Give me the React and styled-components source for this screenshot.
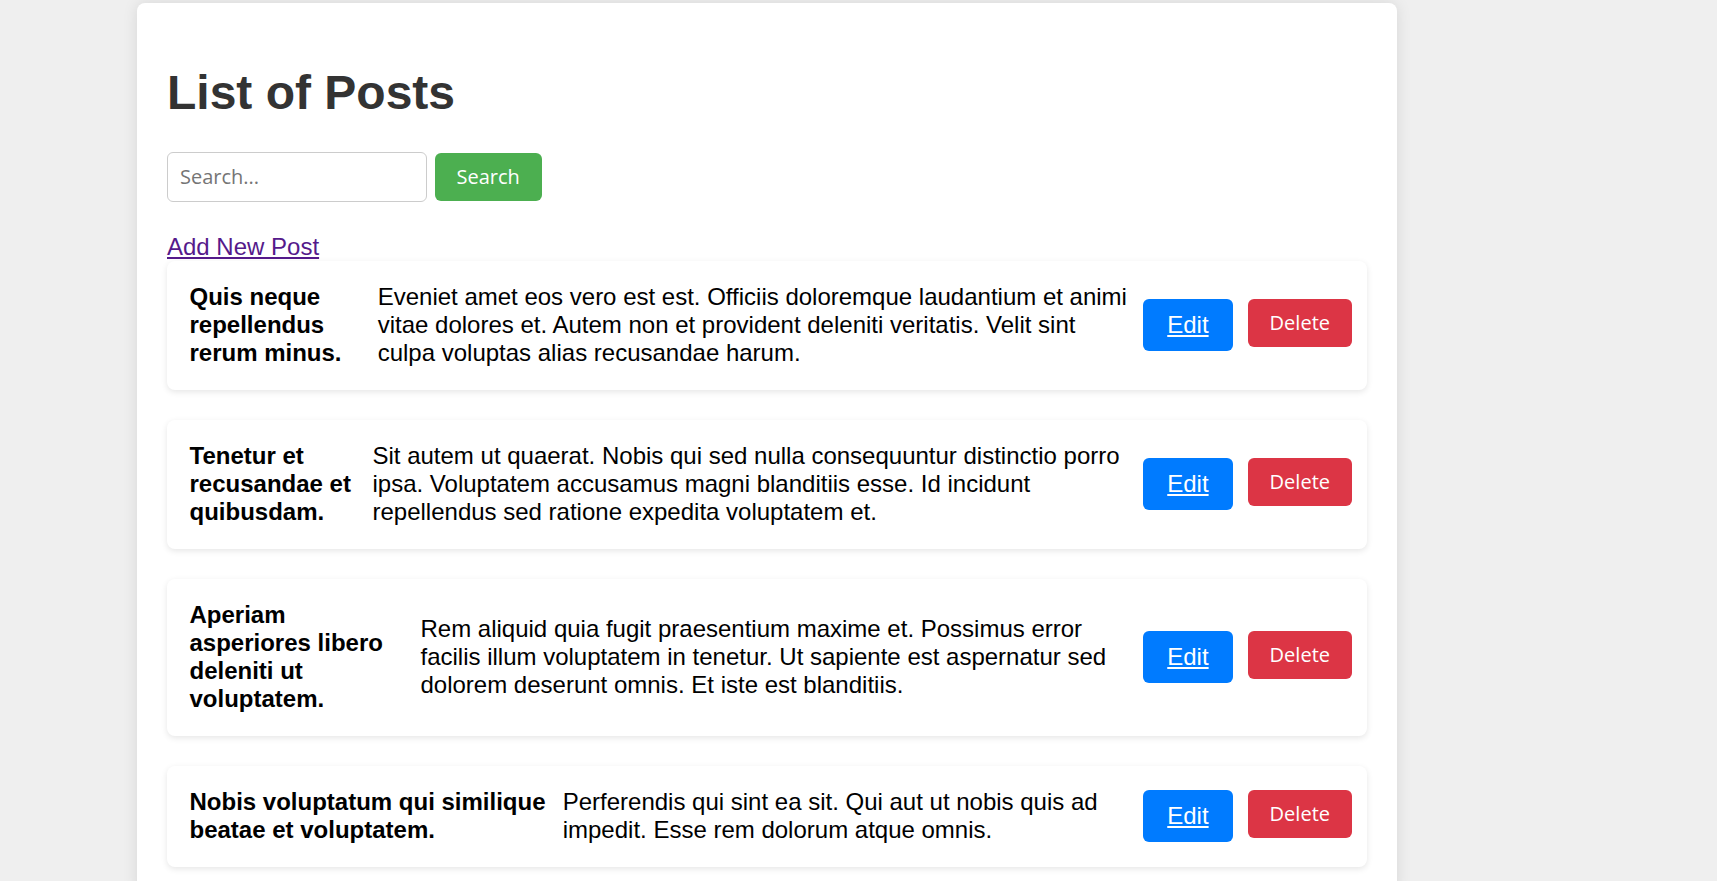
import React from "react";
import styled, { createGlobalStyle } from "styled-components";

const GlobalStyle = createGlobalStyle`
  html, body {
    margin: 0;
    padding: 0;
    background: #efefef;
  }
  body {
    font-family: "Liberation Sans", Arial, sans-serif;
    font-size: 24px;
    color: #000;
  }
`;

const Container = styled.div`
  width: 1200px;
  margin: 3px 0 0 137px;
  padding: 30px 30px 30px;
  background: white;
  border-radius: 8px;
  box-shadow: 0 0 15px rgba(0, 0, 0, 0.1);
`;

const Heading = styled.h1`
  margin: 32px 0;
  font-size: 48px;
  font-weight: bold;
  color: #333;
`;

const SearchForm = styled.form`
  display: flex;
  align-items: center;
  gap: 7.5px;
  margin-bottom: 31px;
`;

const SearchInput = styled.input`
  box-sizing: border-box;
  width: 260px;
  height: 49.5px;
  padding: 0 12px;
  border: 1px solid #ccc;
  border-radius: 6px;
  font-family: "Open Sans", "Noto Sans", sans-serif;
  font-size: 20px;
  color: #333;
  outline: none;

  &::placeholder {
    color: #757575;
  }
`;

const Button = styled.button`
  height: 48px;
  padding: 0 22px;
  border: none;
  border-radius: 6px;
  background: ${(p) => p.$bg};
  color: white;
  font-family: "Open Sans", "Noto Sans", sans-serif;
  font-size: 20px;
  line-height: 24px;
  cursor: pointer;
`;

const AddLink = styled.a`
  display: block;
  width: fit-content;
  color: #551a8b;
  text-decoration: underline;
  font-size: 24px;
`;

const PostList = styled.div`
  display: flex;
  flex-direction: column;
  gap: 30px;
`;

const Card = styled.div`
  display: flex;
  align-items: center;
  padding: 22.5px 15px 22.5px 22.5px;
  background: white;
  border-radius: 8px;
  box-shadow: 0 2px 6px rgba(0, 0, 0, 0.1);
`;

const Title = styled.h3`
  margin: 0;
  font-size: 24px;
  font-weight: bold;
  line-height: normal;
`;

const Description = styled.p`
  margin: 0 8.5px 0 15px;
  font-size: 24px;
  line-height: normal;
`;

const Actions = styled.div`
  flex: 0 0 auto;
  display: flex;
  align-items: flex-start;
  gap: 15px;
`;

const EditLink = styled.a`
  display: block;
  padding: 12px 24px;
  border-radius: 6px;
  background: #007bff;
  color: white;
  text-decoration: underline;
  font-size: 24px;
  line-height: normal;
`;

const posts = [
  {
    id: 1,
    title: "Quis neque repellendus rerum minus.",
    body: "Eveniet amet eos vero est est. Officiis doloremque laudantium et animi vitae dolores et. Autem non et provident deleniti veritatis. Velit sint culpa voluptas alias recusandae harum.",
  },
  {
    id: 2,
    title: "Tenetur et recusandae et quibusdam.",
    body: "Sit autem ut quaerat. Nobis qui sed nulla consequuntur distinctio porro ipsa. Voluptatem accusamus magni blanditiis esse. Id incidunt repellendus sed ratione expedita voluptatem et.",
  },
  {
    id: 3,
    title: "Aperiam asperiores libero deleniti ut voluptatem.",
    body: "Rem aliquid quia fugit praesentium maxime et. Possimus error facilis illum voluptatem in tenetur. Ut sapiente est aspernatur sed dolorem deserunt omnis. Et iste est blanditiis.",
  },
  {
    id: 4,
    title: "Nobis voluptatum qui similique beatae et voluptatem.",
    body: "Perferendis qui sint ea sit. Qui aut ut nobis quis ad impedit. Esse rem dolorum atque omnis.",
  },
];

const PostCard = ({ post }) => (
  <Card>
    <Title>{post.title}</Title>
    <Description>{post.body}</Description>
    <Actions>
      <EditLink href="#">Edit</EditLink>
      <Button $bg="#dc3545">Delete</Button>
    </Actions>
  </Card>
);

const App = () => {
  return (
    <>
      <GlobalStyle />
      <Container>
        <Heading>List of Posts</Heading>
        <SearchForm onSubmit={(e) => e.preventDefault()}>
          <SearchInput type="text" placeholder="Search..." />
          <Button $bg="#4caf50" type="submit">
            Search
          </Button>
        </SearchForm>
        <AddLink href="#">Add New Post</AddLink>
        <PostList>
          {posts.map((post) => (
            <PostCard key={post.id} post={post} />
          ))}
        </PostList>
      </Container>
    </>
  );
};

export default App;
